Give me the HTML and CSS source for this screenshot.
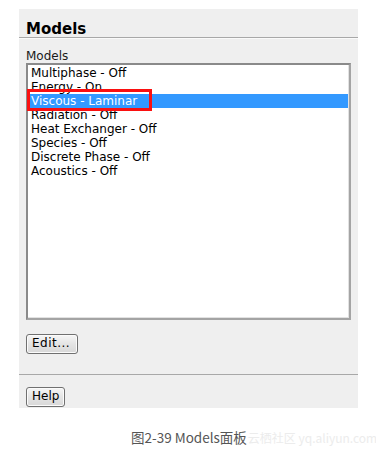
FILE: index.html
```html
<!DOCTYPE html>
<html>
<head>
<meta charset="utf-8">
<link rel="stylesheet" href="styles.css">
</head>
<body>
<div class="panel">
  <div class="header"><span class="title">Models</span></div>
  <div class="main">
    <div class="label">Models</div>
    <div class="list">
      <div class="item">Multiphase - Off</div>
      <div class="item">Energy - On</div>
      <div class="item selected">Viscous - Laminar</div>
      <div class="item">Radiation - Off</div>
      <div class="item">Heat Exchanger - Off</div>
      <div class="item">Species - Off</div>
      <div class="item">Discrete Phase - Off</div>
      <div class="item">Acoustics - Off</div>
      <div class="mark"></div>
    </div>
    <div class="btn-row"><button class="btn btn-wide">Edit...</button></div>
  </div>
  <div class="footer"><button class="btn">Help</button></div>
</div>
<div class="caption"><span class="cap-text">图2-39 Models面板</span><span class="watermark">云栖社区 yq.aliyun.com</span></div>
</body>
</html>
```
FILE: styles.css
```css
html, body {
  margin: 0;
  padding: 0;
  background: #ffffff;
}
body {
  width: 376px;
  height: 452px;
  overflow: hidden;
  font-family: "DejaVu Sans", Verdana, sans-serif;
}
.panel {
  margin: 9px 0 0 19px;
  width: 339px;
  height: 399px;
  background: #efefef;
  display: flex;
  flex-direction: column;
}
.header {
  height: 29px;
  box-sizing: border-box;
  border-bottom: 1px solid #a8a8a8;
  padding: 12px 0 0 7px;
}
.title {
  display: block;
  font-weight: bold;
  font-size: 15px;
  line-height: 16px;
  color: #000;
}
.main {
  height: 337px;
  box-sizing: border-box;
  border-bottom: 1px solid #a8a8a8;
  border-top: 1px solid #fafafa;
  padding: 11px 0 0 7px;
}
.label {
  font-size: 12px;
  line-height: 13px;
  color: #1a1a1a;
  height: 13px;
}
.list {
  position: relative;
  width: 325px;
  height: 257px;
  box-sizing: border-box;
  background: #fff;
  border: 2px solid;
  border-color: #8a8a8a #a4a4a4 #a4a4a4 #8a8a8a;
  box-shadow: inset -1px -1px 0 #e2e2e2;
  padding: 1px 1px 0 0;
}
.item {
  height: 14px;
  line-height: 14px;
  font-size: 12px;
  padding-left: 3px;
  color: #000;
  white-space: nowrap;
}
.item.selected {
  background: #3399ff;
  color: #fff;
}
.mark {
  position: absolute;
  left: -1px;
  top: 24px;
  width: 125px;
  height: 22px;
  box-sizing: border-box;
  border: 3px solid #fa1010;
}
.btn-row {
  padding-top: 12px;
}
.btn {
  font-family: "DejaVu Sans", Verdana, sans-serif;
  font-size: 12px;
  line-height: 13px;
  height: 20px;
  padding: 0 5px;
  margin: 0;
  color: #000;
  border: 1px solid #707070;
  border-radius: 3px;
  background: linear-gradient(#f6f6f6, #e4e4e4 50%, #d8d8d8);
  box-shadow: inset 0 0 0 1px #fbfbfb;
}
.btn-wide {
  padding: 0 7px 0 5px;
  letter-spacing: 0.5px;
}
.footer {
  flex: 1;
  padding: 10px 0 0 7px;
}
.caption {
  margin-top: 19px;
  padding-left: 131px;
  height: 20px;
  display: flex;
  align-items: baseline;
  white-space: nowrap;
}
.cap-text {
  font-family: "Noto Sans CJK SC", "Noto Sans", sans-serif;
  font-size: 13.5px;
  color: #555;
}
.watermark {
  font-family: "Noto Sans CJK SC", "Noto Sans", sans-serif;
  font-size: 12px;
  color: #ececec;
  margin-left: 1px;
}
```
